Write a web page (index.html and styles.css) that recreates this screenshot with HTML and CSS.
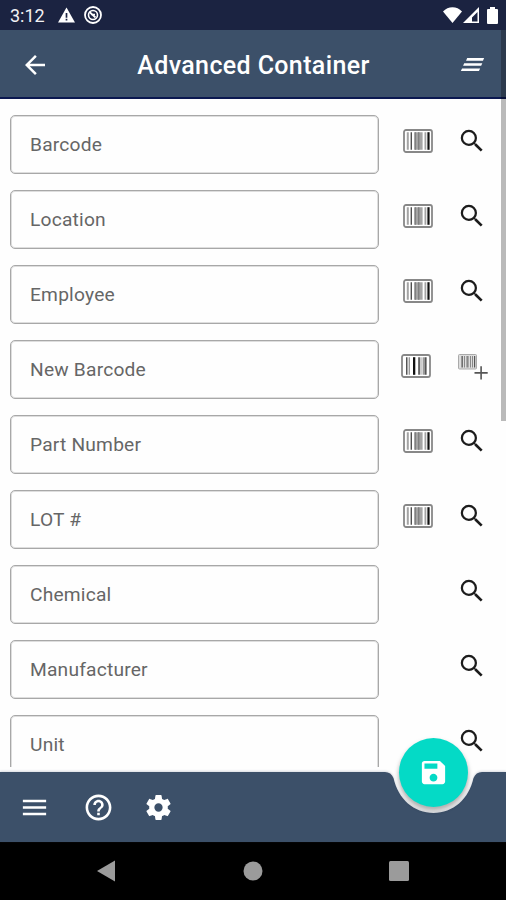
FILE: index.html
```html
<!DOCTYPE html>
<html lang="en">
<head>
<meta charset="utf-8">
<title>Advanced Container</title>
<link rel="stylesheet" href="styles.css">
</head>
<body>
<svg class="defs" aria-hidden="true">
  <symbol id="search" viewBox="0 0 24 24"><path d="M15.5 14h-.79l-.28-.27A6.47 6.47 0 0 0 16 9.5 6.5 6.5 0 1 0 9.5 16c1.61 0 3.09-.59 4.23-1.57l.27.28v.79l5 4.99L20.49 19zM9.5 14.2a4.7 4.7 0 1 1 0-9.4 4.7 4.7 0 0 1 0 9.4z"/></symbol>
  <symbol id="barcode" viewBox="0 0 30 24">
    <rect x="1" y="1" width="28" height="22" rx="2" fill="#fff" stroke="#888" stroke-width="1.8"/>
    <path fill="#a4a4a4" d="M3.8 3.2h2v17.6h-2zM11 3.2h8.6v17.6H11zM21.500 3.2h1.800v17.6h-1.800z"/>
    <path fill="#505050" d="M7.600 3.2H9v17.600H7.600z"/>
    <path fill="#808080" d="M12 3.2h1v17.600h-1zM15 3.2h1.400v17.600H15z"/>
    <path fill="#111" d="M24.400 3.2h2.200v17.600h-2.200z"/>
  </symbol>
  <symbol id="barcode-new" viewBox="0 0 30 24">
    <rect x="1" y="1" width="28" height="22" rx="2" fill="#fff" stroke="#888" stroke-width="1.8"/>
    <path fill="#555" d="M5 3.2h1.500v17.600H5zM17.200 3.2h1.700v17.600h-1.700zM24 3.2h1.600v17.600H24z"/>
    <path fill="#999" d="M7.600 3.2H9v17.600H7.600zM19.500 3.2h1v17.600h-1zM21.600 3.2H24v17.600h-2.400z"/>
    <path fill="#111" d="M12 3.2h2.300v17.600H12z"/>
  </symbol>
  <symbol id="barcode-add" viewBox="0 0 30 26">
    <rect x=".5" y=".5" width="18" height="14.5" rx="1" fill="#ddd" stroke="#aaa"/>
    <path fill="#555" d="M3.500 2h1.300v11.500H3.500zM16 2h1.200v11.500H16z"/>
    <path fill="#888" d="M6 2h1v11.500H6zM8.400 2h2.200v11.500H8.400zM12 2h1v11.500h-1zM14 2h1v11.500h-1z"/>
    <path fill="#555" d="M22.300 12.300h1.600v5.800h5.800v1.600h-5.800v5.800h-1.600v-5.800h-5.800v-1.600h5.800z"/>
  </symbol>
</svg>
<div class="screen">
  <div class="status">
    <span class="clock">3:12</span>
    <svg class="warn" viewBox="0 0 18 16"><path d="M9 0l9 16H0z"/><path fill="#1b2341" d="M8.100 6h1.800v4.800H8.100zM8.100 12h1.800v1.800H8.100z"/></svg>
    <svg class="sync" viewBox="0 0 18 18"><g fill="none" stroke="#fff"><circle cx="9" cy="9" r="8" stroke-width="1.8"/><circle cx="9" cy="9" r="4.5" stroke-width="1.6"/><path d="M5.500 6l6 5.500M7 8.500h4" stroke-width="1.7"/></g></svg>
    <span class="grow"></span>
    <svg class="wifi" viewBox="0 0 19 16"><path d="M9.500 16L0 4.500C5-1.300 14-1.300 19 4.500z"/></svg>
    <svg class="signal" viewBox="0 0 16 16"><path fill-rule="evenodd" d="M16 0v16H0zM14.500 5v9.500H9V10.500z"/></svg>
    <svg class="battery" viewBox="0 0 11 17"><path d="M3 0h5v2h2q1 0 1 1v13q0 1-1 1H1q-1 0-1-1V3q0-1 1-1h2z"/></svg>
  </div>
  <header class="appbar">
    <svg class="back" viewBox="0 0 24 24"><path d="M20 11H7.830l5.590-5.590L12 4l-8 8 8 8 1.410-1.410L7.830 13H20z"/></svg>
    <h1>Advanced Container</h1>
    <svg class="clear" viewBox="0 0 24 24"><path d="M5.600 11h14l-.9 2h-14zM3.900 15h14l-.9 2H3zM7.900 7H21l-.9 2H7z"/></svg>
  </header>
  <main class="form">
    <div class="row"><div class="field">Barcode</div><svg class="scan"><use href="#barcode"/></svg><svg class="find"><use href="#search"/></svg></div>
    <div class="row"><div class="field">Location</div><svg class="scan"><use href="#barcode"/></svg><svg class="find"><use href="#search"/></svg></div>
    <div class="row"><div class="field">Employee</div><svg class="scan"><use href="#barcode"/></svg><svg class="find"><use href="#search"/></svg></div>
    <div class="row"><div class="field">New Barcode</div><svg class="scan scan-new"><use href="#barcode-new"/></svg><svg class="add"><use href="#barcode-add"/></svg></div>
    <div class="row"><div class="field">Part Number</div><svg class="scan"><use href="#barcode"/></svg><svg class="find"><use href="#search"/></svg></div>
    <div class="row"><div class="field">LOT #</div><svg class="scan"><use href="#barcode"/></svg><svg class="find"><use href="#search"/></svg></div>
    <div class="row"><div class="field">Chemical</div><svg class="find"><use href="#search"/></svg></div>
    <div class="row"><div class="field">Manufacturer</div><svg class="find"><use href="#search"/></svg></div>
    <div class="row"><div class="field">Unit</div><svg class="find"><use href="#search"/></svg></div>
  </main>
  <footer class="bottombar">
    <svg class="barshape" viewBox="0 0 506 70"><path d="M0 0H385Q391 0 393.500 6C398 27 414 41 433.500 41S469 27 473.500 6Q476 0 482 0H506V70H0z"/></svg>
    <svg class="tool" viewBox="0 0 24 24"><path d="M3 18h18v-2H3zm0-5h18v-2H3zm0-7v2h18V6z"/></svg>
    <svg class="tool help" viewBox="0 0 24 24"><path d="M11 18h2v-2h-2zm1-16C6.480 2 2 6.480 2 12s4.480 10 10 10 10-4.480 10-10S17.520 2 12 2zm0 18c-4.410 0-8-3.590-8-8s3.590-8 8-8 8 3.590 8 8-3.590 8-8 8zm0-14c-2.210 0-4 1.790-4 4h2c0-1.100.9-2 2-2s2 .9 2 2c0 2-3 1.750-3 5h2c0-2.250 3-2.500 3-5 0-2.210-1.790-4-4-4z"/></svg>
    <svg class="tool gear" viewBox="0 0 24 24"><path d="M19.140 12.940c.04-.3.060-.61.060-.94 0-.32-.02-.64-.07-.94l2.030-1.580c.18-.14.23-.41.12-.61l-1.920-3.320c-.12-.22-.37-.29-.59-.22l-2.390.96c-.5-.38-1.030-.7-1.620-.94l-.36-2.540c-.04-.24-.24-.41-.48-.41h-3.840c-.24 0-.43.17-.47.41l-.36 2.540c-.59.24-1.130.57-1.620.94l-2.390-.96c-.22-.08-.47 0-.59.22L2.740 8.870c-.12.21-.08.47.12.61l2.030 1.580c-.05.3-.09.63-.09.94s.02.64.07.94l-2.030 1.580c-.18.14-.23.41-.12.61l1.920 3.320c.12.22.37.29.59.22l2.390-.96c.5.38 1.030.7 1.620.94l.36 2.540c.05.24.24.41.48.41h3.840c.24 0 .44-.17.47-.41l.36-2.540c.59-.24 1.130-.56 1.620-.94l2.390.96c.22.080.47 0 .59-.22l1.920-3.320c.12-.22.070-.47-.12-.61zM12 15.200A3.200 3.200 0 1 1 12 8.800a3.200 3.200 0 0 1 0 6.400z"/></svg>
    <div class="fab"><svg viewBox="0 0 24 24"><path d="M17 3H5c-1.110 0-2 .9-2 2v14c0 1.100.89 2 2 2h14c1.100 0 2-.9 2-2V7zm-5 16c-1.660 0-3-1.340-3-3s1.340-3 3-3 3 1.340 3 3-1.340 3-3 3zm3-10H5V5h10z"/></svg></div>
  </footer>
  <nav class="sysnav">
    <svg viewBox="0 0 20 22"><path d="M19 .5v21L1 11z"/></svg>
    <svg viewBox="0 0 20 20"><circle cx="10" cy="10" r="9.500"/></svg>
    <svg viewBox="0 0 20 20"><rect width="20" height="20" rx="1.500"/></svg>
  </nav>
  <div class="scrollbar"></div>
</div>
</body>
</html>
```
FILE: styles.css
```css
* { box-sizing: border-box; }
body { margin: 0; font-family: Roboto, "Liberation Sans", sans-serif; }
svg { display: block; flex: none; }
.defs { position: absolute; width: 0; height: 0; }
.screen {
  position: relative;
  display: flex;
  flex-direction: column;
  width: 506px;
  height: 900px;
  overflow: hidden;
  background: #fefefe;
}
.status {
  display: flex;
  align-items: center;
  height: 30px;
  padding: 0 8px 0 10px;
  background: #1b2341;
  color: #f2f2f4;
  fill: #fff;
}
.clock { width: 48px; font-size: 18px; line-height: 30px; padding-top: 2px; }
.warn { width: 17px; height: 16px; }
.sync { width: 18px; height: 18px; margin-left: 9px; }
.grow { flex: 1; }
.wifi { width: 19px; height: 16px; }
.signal { width: 16px; height: 16px; margin-left: 1px; }
.battery { width: 11px; height: 17px; margin-left: 8px; }
.appbar {
  display: flex;
  align-items: center;
  justify-content: space-between;
  height: 69px;
  padding: 2px 18px 0 20px;
  background: #3c5069;
  border-bottom: 2px solid #0b1850;
  fill: #fff;
}
.appbar h1 { margin: 0; padding-top: 2px; color: #fff; font-size: 25px; font-weight: 500; letter-spacing: .37px; line-height: 30px; }
.back { width: 30px; height: 30px; }
.clear { width: 31px; height: 31px; }
.form {
  display: flex;
  flex-direction: column;
  gap: 16px;
  height: 668px;
  padding: 16px 19px 0 10px;
  overflow: hidden;
}
.row { display: flex; flex: none; height: 59px; }
.field {
  width: 369px;
  height: 59px;
  padding-left: 19px;
  border: 1px solid #a8a8a8;
  box-shadow: inset 0 0 0 1px #dedede;
  border-radius: 5px;
  color: #666;
  font-size: 19.2px;
  letter-spacing: .2px;
  line-height: 58px;
}
.scan { width: 30px; height: 24px; margin: 14px 0 0 24px; }
.scan-new { margin-left: 22px; }
.find { width: 30px; height: 30px; margin: 11px 0 0 auto; fill: #1c1c1c; }
.add { width: 30px; height: 26px; margin: 14px -1px 0 auto; }
.bottombar {
  position: relative;
  display: flex;
  align-items: center;
  height: 70px;
  margin-top: 5px;
  padding-left: 19px;
  fill: #fff;
}
.barshape { position: absolute; left: 0; top: 0; width: 506px; height: 70px; fill: #3c5069; filter: drop-shadow(0 -1px 1px #8a94a455); }
.tool { position: relative; width: 31px; height: 31px; }
.help { margin-left: 33px; }
.gear { margin-left: 29px; }
.fab {
  position: absolute;
  left: 399px;
  top: -34px;
  display: grid;
  place-items: center;
  width: 69px;
  height: 69px;
  border-radius: 50%;
  background: #04dac6;
  box-shadow: 0 4px 4px 0 #0003, 0 3px 5px 1px #0002;
}
.fab svg { width: 31px; height: 31px; }
.sysnav {
  display: flex;
  align-items: center;
  justify-content: space-between;
  height: 58px;
  padding: 0 97px 0 96px;
  background: #000;
  fill: #9b9b9b;
}
.sysnav svg { width: 20px; height: 22px; }
.scrollbar { position: absolute; right: 0; top: 30px; width: 5px; height: 391px; background: #0004; }
```
